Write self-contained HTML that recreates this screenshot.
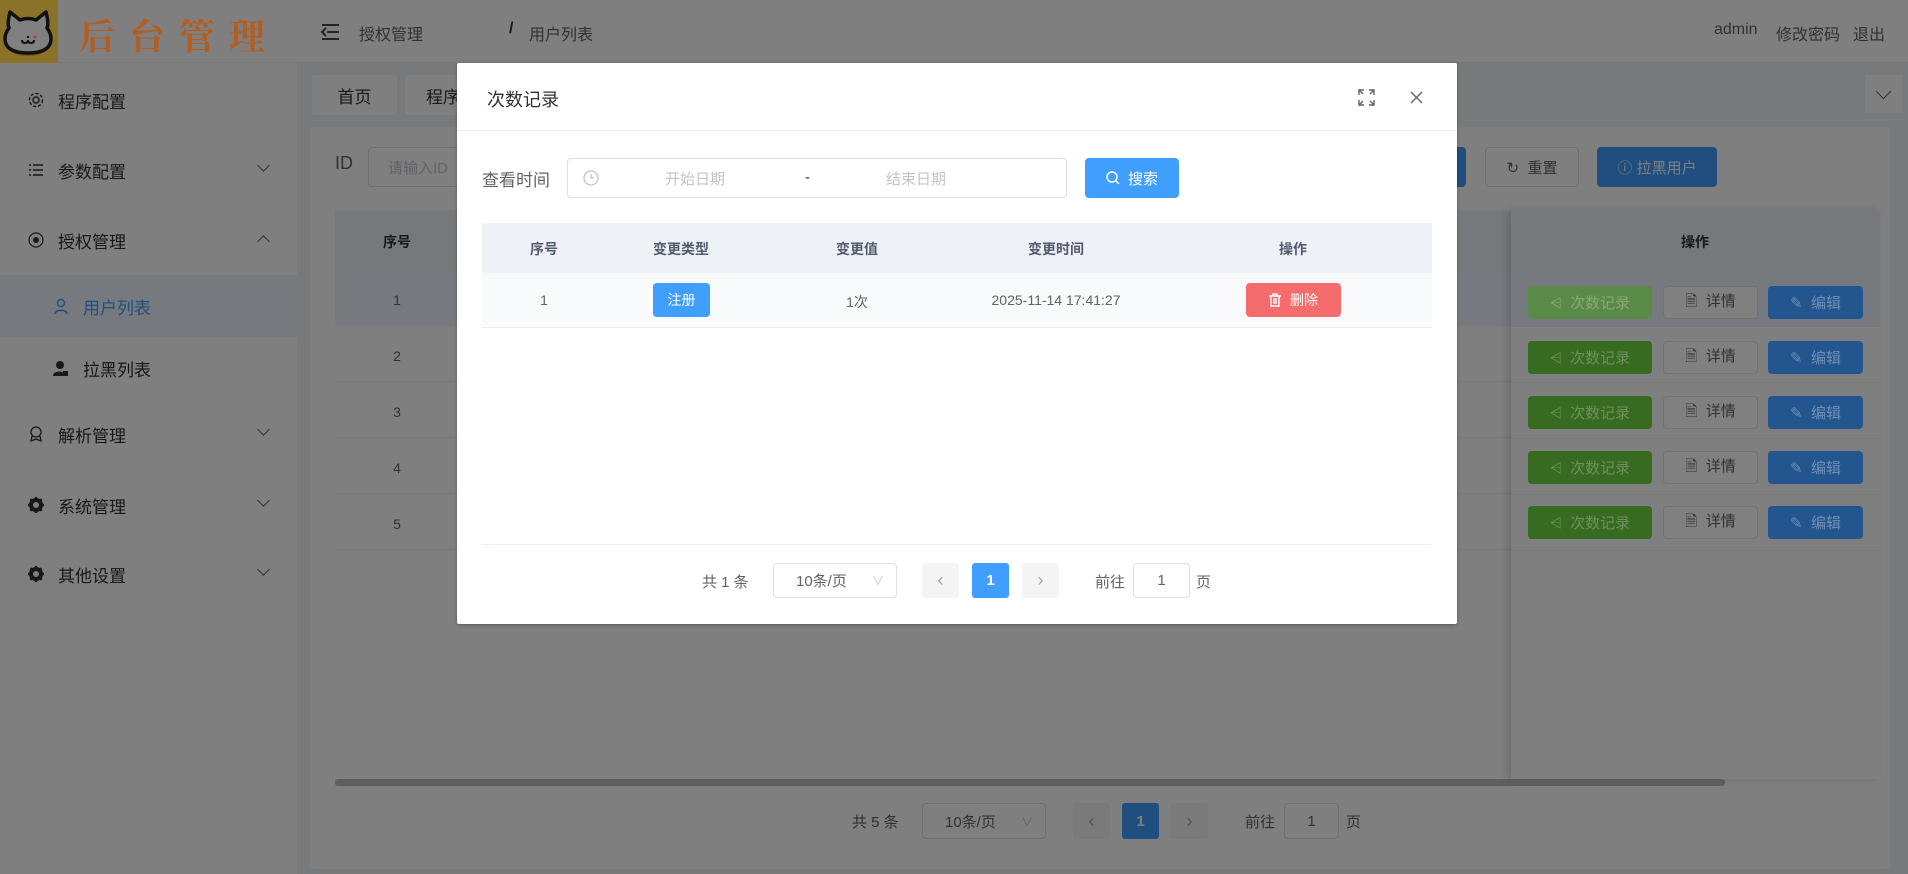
<!DOCTYPE html>
<html><head><meta charset="utf-8">
<style>
*{box-sizing:border-box;margin:0;padding:0}
body{width:1908px;height:874px;overflow:hidden;position:relative;background:#f0f2f5;font-family:"Liberation Sans","Noto Sans CJK SC",sans-serif;color:#303133}
.a{position:absolute}
.c{display:flex;align-items:center;justify-content:center}
.menu{position:absolute;left:0;width:297px;height:62px;display:flex;align-items:center;font-size:17px;color:#303133}
.menu .ic{position:absolute;left:28px;width:16px;height:16px}
.menu .t{position:absolute;left:58px}
.menu .ch{position:absolute;left:259px;width:9px;height:9px;border-right:1.5px solid #606266;border-bottom:1.5px solid #606266;transform:rotate(45deg);top:22px}
.menu .ch.up{transform:rotate(-135deg);top:28px}
.btn{position:absolute;border-radius:4px;display:flex;align-items:center;justify-content:center;font-size:15px;color:#fff}
.cell{position:absolute;font-size:14px;color:#606266;transform:translateX(-50%)}
.row{position:absolute;left:335px;width:1545px;height:56px;border-bottom:1px solid #ebeef5}
.pg{position:absolute;border-radius:3px;background:#f4f4f5;display:flex;align-items:center;justify-content:center;font-size:18px;color:#a0a4ac}
.inp{position:absolute;border:1px solid #dcdfe6;border-radius:4px;background:#fff;display:flex;align-items:center;font-size:15px;color:#606266}
</style></head><body>
<!-- header -->
<div class="a" style="left:0;top:0;width:1908px;height:63px;background:#fff;border-bottom:1px solid #eee"></div>
<svg class="a" style="left:320px;top:24px" width="20" height="16" viewBox="0 0 20 16"><path d="M2 1h17M7 8h12M2 15h17M6 4L2 8l4 4" stroke="#303133" stroke-width="1.8" fill="none"/></svg>
<div class="a" style="left:359px;top:21px;font-size:16px;color:#606266">授权管理</div>
<div class="a" style="left:509px;top:20px;font-size:16px;color:#303133;font-weight:bold">/</div>
<div class="a" style="left:529px;top:21px;font-size:16px;color:#606266">用户列表</div>
<div class="a" style="left:1714px;top:21px;font-size:16px;color:#606266">admin</div>
<div class="a" style="left:1776px;top:21px;font-size:16px;color:#606266">修改密码</div>
<div class="a" style="left:1853px;top:21px;font-size:16px;color:#606266">退出</div>
<!-- sidebar -->
<div class="a" style="left:0;top:63px;width:297px;height:811px;background:#fff"></div>
<div class="menu" style="top:69px"><svg class="ic" viewBox="0 0 16 16"><circle cx="8" cy="8" r="3" fill="none" stroke="#303133" stroke-width="1.5"/><circle cx="8" cy="8" r="6.5" fill="none" stroke="#303133" stroke-width="1.5" stroke-dasharray="3 2"/></svg><span class="t">程序配置</span></div>
<div class="menu" style="top:139px"><svg class="ic" viewBox="0 0 16 16"><path d="M1 3h2M5 3h10M1 8h2M5 8h10M1 13h2M5 13h10" stroke="#303133" stroke-width="1.6"/></svg><span class="t">参数配置</span><i class="ch"></i></div>
<div class="menu" style="top:209px"><svg class="ic" viewBox="0 0 16 16"><circle cx="8" cy="8" r="7" fill="none" stroke="#303133" stroke-width="1.2"/><circle cx="8" cy="8" r="3" fill="#303133"/></svg><span class="t">授权管理</span><i class="ch up"></i></div>
<div class="menu" style="top:275px;background:#ecf5ff;color:#409eff"><svg class="ic" style="left:53px" viewBox="0 0 16 16"><circle cx="8" cy="5" r="3.5" fill="none" stroke="#409eff" stroke-width="1.5"/><path d="M2 16c0-5 12-5 12 0" fill="none" stroke="#409eff" stroke-width="1.5"/></svg><span class="t" style="left:83px">用户列表</span></div>
<div class="menu" style="top:337px"><svg class="ic" style="left:53px" viewBox="0 0 16 16"><circle cx="7" cy="5" r="4" fill="#303133"/><path d="M0 16c0-6 12-6 12 0z" fill="#303133"/><rect x="10" y="11" width="5" height="5" fill="#303133"/></svg><span class="t" style="left:83px">拉黑列表</span></div>
<div class="menu" style="top:403px"><svg class="ic" viewBox="0 0 16 16"><circle cx="8" cy="6" r="5" fill="none" stroke="#303133" stroke-width="1.3"/><path d="M4 10l-1 5 5-2 5 2-1-5" fill="none" stroke="#303133" stroke-width="1.3"/></svg><span class="t">解析管理</span><i class="ch"></i></div>
<div class="menu" style="top:474px"><svg class="ic" viewBox="0 0 16 16"><circle cx="8" cy="8" r="5" fill="none" stroke="#303133" stroke-width="4"/><path d="M8 0v3M8 13v3M0 8h3M13 8h3M2.3 2.3l2 2M11.7 11.7l2 2M2.3 13.7l2-2M11.7 4.3l2-2" stroke="#303133" stroke-width="2.5"/></svg><span class="t">系统管理</span><i class="ch"></i></div>
<div class="menu" style="top:543px"><svg class="ic" viewBox="0 0 16 16"><circle cx="8" cy="8" r="5" fill="none" stroke="#303133" stroke-width="4"/><path d="M8 0v3M8 13v3M0 8h3M13 8h3M2.3 2.3l2 2M11.7 11.7l2 2M2.3 13.7l2-2M11.7 4.3l2-2" stroke="#303133" stroke-width="2.5"/></svg><span class="t">其他设置</span><i class="ch"></i></div>
<!-- tabs -->
<div class="a c" style="left:312px;top:75px;width:85px;height:40px;background:#fff;border-radius:3px;font-size:17px">首页</div>
<div class="a c" style="left:405px;top:75px;width:110px;height:40px;background:#fff;border-radius:3px;font-size:17px">程序配置</div>
<div class="a c" style="left:1865px;top:75px;width:37px;height:38px;background:#fff"><i style="width:11px;height:11px;border-right:1.5px solid #606266;border-bottom:1.5px solid #606266;transform:rotate(45deg);margin-top:-6px"></i></div>
<!-- card -->
<div class="a" style="left:310px;top:127px;width:1580px;height:742px;background:#fff;border-radius:4px"></div>
<div class="a" style="left:335px;top:153px;font-size:18px;color:#606266">ID</div>
<div class="inp" style="left:368px;top:147px;width:200px;height:40px;padding-left:19px;color:#c0c4cc">请输入ID</div>
<div class="btn" style="left:1400px;top:147px;width:66px;height:40px;background:#409eff"></div>
<div class="btn" style="left:1485px;top:147px;width:94px;height:40px;border:1px solid #dcdfe6;background:#fff;color:#606266">&#x21bb;&nbsp; 重置</div>
<div class="btn" style="left:1597px;top:147px;width:120px;height:40px;background:#409eff">ⓘ 拉黑用户</div>
<!-- table -->
<div class="a" style="left:335px;top:210px;width:1545px;height:60px;background:#eef1f6"></div>
<div class="cell" style="left:397px;top:232px;font-weight:bold;color:#303133">序号</div>
<div class="row" style="top:270px;background:#ecf5ff"></div>
<div class="row" style="top:326px"></div>
<div class="row" style="top:382px"></div>
<div class="row" style="top:438px"></div>
<div class="row" style="top:494px"></div>
<div class="cell" style="left:397px;top:292px">1</div>
<div class="cell" style="left:397px;top:348px">2</div>
<div class="cell" style="left:397px;top:404px">3</div>
<div class="cell" style="left:397px;top:460px">4</div>
<div class="cell" style="left:397px;top:516px">5</div>
<!-- fixed op column -->
<div class="a" style="left:1511px;top:210px;width:369px;height:569px;background:#fff;box-shadow:-4px 0 8px rgba(0,0,0,.15)"></div>
<div class="a" style="left:1511px;top:210px;width:369px;height:60px;background:#eef1f6"></div>
<div class="cell" style="left:1695px;top:232px;font-weight:bold;color:#303133">操作</div>
<div class="a" style="left:1511px;top:270px;width:369px;height:56px;background:#ecf5ff"></div>
<div class="a" style="left:1511px;top:326px;width:369px;height:1px;background:#ebeef5"></div>
<div class="a" style="left:1511px;top:382px;width:369px;height:1px;background:#ebeef5"></div>
<div class="a" style="left:1511px;top:438px;width:369px;height:1px;background:#ebeef5"></div>
<div class="a" style="left:1511px;top:494px;width:369px;height:1px;background:#ebeef5"></div>
<div class="a" style="left:1511px;top:550px;width:369px;height:1px;background:#ebeef5"></div>
<!-- scrollbar -->
<div class="a" style="left:335px;top:779px;width:1390px;height:7px;background:#909399;border-radius:3px;opacity:.6"></div>
<!-- bottom pagination -->
<div class="a" style="left:852px;top:811px;font-size:15px;color:#606266">共 5 条</div>
<div class="inp" style="left:922px;top:803px;width:124px;height:36px;padding-left:22px">10条/页<span style="position:absolute;right:12px;color:#c0c4cc;font-size:12px">∨</span></div>
<div class="pg" style="left:1073px;top:803px;width:37px;height:36px">‹</div>
<div class="pg" style="left:1122px;top:803px;width:37px;height:36px;background:#409eff;color:#fff;font-weight:bold;font-size:15px">1</div>
<div class="pg" style="left:1171px;top:803px;width:37px;height:36px">›</div>
<div class="a" style="left:1245px;top:811px;font-size:15px;color:#606266">前往</div>
<div class="inp" style="left:1284px;top:803px;width:55px;height:36px;justify-content:center">1</div>
<div class="a" style="left:1346px;top:811px;font-size:15px;color:#606266">页</div>

<!-- overlay -->
<div class="a" style="left:0;top:0;width:1908px;height:874px;background:rgba(0,0,0,.5)"></div>
<!-- logo & title above -->
<div class="a" style="left:0;top:0;width:58px;height:63px;background:#8a7328"></div>
<svg class="a" style="left:2px;top:6px" width="52" height="52" viewBox="0 0 52 52"><ellipse cx="26" cy="47" rx="14" ry="3" fill="#7a5a10"/><path d="M8 6l10 8q8-3 16 0l10-8q3 12 1 16q6 8 3 16q-4 9-22 9q-18 0-22-9q-3-8 3-16q-2-4 1-16z" fill="#808080" stroke="#111" stroke-width="3.5" stroke-linejoin="round"/><path d="M20 34q0 3 3 3q3 0 3-3q0 3 3 3q3 0 3-3M25 31h2" stroke="#111" stroke-width="2" fill="none"/><circle cx="33" cy="31" r="1.5" fill="#c33"/></svg>
<div class="a" style="left:79px;top:9px;font-size:36px;font-weight:bold;color:#b25e22;letter-spacing:14px;font-family:'Noto Serif CJK SC','Noto Sans CJK SC',serif">后台管理</div>

<!-- dialog -->
<div class="a" style="left:457px;top:63px;width:1000px;height:561px;background:#fff;border-radius:2px;box-shadow:0 1px 3px rgba(0,0,0,.3)"></div>
<div class="a" style="left:487px;top:86px;font-size:18px;color:#303133">次数记录</div>
<svg class="a" style="left:1358px;top:89px" width="17" height="17" viewBox="0 0 17 17"><path d="M1 6V1h5M1 1l4 4M16 6V1h-5M16 1l-4 4M1 11v5h5M1 16l4-4M16 11v5h-5M16 16l-4-4" stroke="#606266" stroke-width="1.4" fill="none"/></svg>
<svg class="a" style="left:1410px;top:91px" width="13" height="13" viewBox="0 0 13 13"><path d="M1 1l11 11M12 1L1 12" stroke="#606266" stroke-width="1.4"/></svg>
<div class="a" style="left:457px;top:130px;width:1000px;height:1px;background:#ebeef5"></div>
<div class="a" style="left:482px;top:166px;font-size:17px;color:#606266">查看时间</div>
<div class="inp" style="left:567px;top:158px;width:500px;height:40px"></div>
<svg class="a" style="left:583px;top:170px" width="16" height="16" viewBox="0 0 16 16"><circle cx="8" cy="8" r="7" fill="none" stroke="#c0c4cc" stroke-width="1.3"/><path d="M8 4v4h3" stroke="#c0c4cc" stroke-width="1.3" fill="none"/></svg>
<div class="a" style="left:665px;top:168px;font-size:15px;color:#c0c4cc">开始日期</div>
<div class="a" style="left:805px;top:169px;font-size:15px;color:#303133">-</div>
<div class="a" style="left:886px;top:168px;font-size:15px;color:#c0c4cc">结束日期</div>
<div class="btn" style="left:1085px;top:158px;width:94px;height:40px;background:#409eff;font-size:15px"><svg width="14" height="14" viewBox="0 0 14 14" style="margin-right:8px"><circle cx="6" cy="6" r="5" fill="none" stroke="#fff" stroke-width="1.5"/><path d="M10 10l3 3" stroke="#fff" stroke-width="1.5"/></svg>搜索</div>
<div class="a" style="left:482px;top:223px;width:950px;height:50px;background:#eef1f6"></div>
<div class="a" style="left:482px;top:273px;width:950px;height:55px;background:#f9fafc;border-bottom:1px solid #ebeef5"></div>
<div class="cell" style="left:544px;top:239px;font-weight:bold;color:#515a6e">序号</div>
<div class="cell" style="left:681px;top:239px;font-weight:bold;color:#515a6e">变更类型</div>
<div class="cell" style="left:857px;top:239px;font-weight:bold;color:#515a6e">变更值</div>
<div class="cell" style="left:1056px;top:239px;font-weight:bold;color:#515a6e">变更时间</div>
<div class="cell" style="left:1293px;top:239px;font-weight:bold;color:#515a6e">操作</div>
<div class="cell" style="left:544px;top:292px">1</div>
<div class="btn" style="left:653px;top:283px;width:57px;height:34px;background:#409eff;font-size:14px">注册</div>
<div class="cell" style="left:857px;top:292px">1次</div>
<div class="cell" style="left:1056px;top:292px">2025-11-14 17:41:27</div>
<div class="btn" style="left:1246px;top:283px;width:95px;height:34px;background:#f56c6c;font-size:14px"><svg width="12" height="14" viewBox="0 0 12 14" style="margin-right:9px"><path d="M0 3h12M4 3V1h4v2M2 3v10h8V3M5 5v6M7 5v6" stroke="#fff" stroke-width="1.4" fill="none"/></svg>删除</div>
<div class="a" style="left:482px;top:544px;width:950px;height:1px;background:#ebeef5"></div>
<div class="a" style="left:702px;top:571px;font-size:15px;color:#606266">共 1 条</div>
<div class="inp" style="left:773px;top:563px;width:124px;height:35px;padding-left:22px">10条/页<span style="position:absolute;right:12px;color:#c0c4cc;font-size:12px">∨</span></div>
<div class="pg" style="left:922px;top:563px;width:37px;height:35px">‹</div>
<div class="pg" style="left:972px;top:563px;width:37px;height:35px;background:#409eff;color:#fff;font-weight:bold;font-size:15px">1</div>
<div class="pg" style="left:1022px;top:563px;width:37px;height:35px">›</div>
<div class="a" style="left:1095px;top:571px;font-size:15px;color:#606266">前往</div>
<div class="inp" style="left:1133px;top:563px;width:57px;height:35px;justify-content:center">1</div>
<div class="a" style="left:1196px;top:571px;font-size:15px;color:#606266">页</div>

<!-- op buttons drawn in overlay-applied colors -->
<div class="btn" style="left:1528px;top:286px;width:124px;height:33px;background:#5a8a48;color:#88a878">⩤&nbsp; 次数记录</div>
<div class="btn" style="left:1663px;top:286px;width:95px;height:33px;border:1px solid #727272;background:#808080;color:#303133">🗎&nbsp; 详情</div>
<div class="btn" style="left:1768px;top:286px;width:95px;height:33px;background:#23568f;color:#6f8fb3">✎&nbsp; 编辑</div>
<div class="btn" style="left:1528px;top:341px;width:124px;height:33px;background:#386b22;color:#6f8f5c">⩤&nbsp; 次数记录</div>
<div class="btn" style="left:1663px;top:341px;width:95px;height:33px;border:1px solid #727272;background:#808080;color:#303133">🗎&nbsp; 详情</div>
<div class="btn" style="left:1768px;top:341px;width:95px;height:33px;background:#23568f;color:#6f8fb3">✎&nbsp; 编辑</div>
<div class="btn" style="left:1528px;top:396px;width:124px;height:33px;background:#386b22;color:#6f8f5c">⩤&nbsp; 次数记录</div>
<div class="btn" style="left:1663px;top:396px;width:95px;height:33px;border:1px solid #727272;background:#808080;color:#303133">🗎&nbsp; 详情</div>
<div class="btn" style="left:1768px;top:396px;width:95px;height:33px;background:#23568f;color:#6f8fb3">✎&nbsp; 编辑</div>
<div class="btn" style="left:1528px;top:451px;width:124px;height:33px;background:#386b22;color:#6f8f5c">⩤&nbsp; 次数记录</div>
<div class="btn" style="left:1663px;top:451px;width:95px;height:33px;border:1px solid #727272;background:#808080;color:#303133">🗎&nbsp; 详情</div>
<div class="btn" style="left:1768px;top:451px;width:95px;height:33px;background:#23568f;color:#6f8fb3">✎&nbsp; 编辑</div>
<div class="btn" style="left:1528px;top:506px;width:124px;height:33px;background:#386b22;color:#6f8f5c">⩤&nbsp; 次数记录</div>
<div class="btn" style="left:1663px;top:506px;width:95px;height:33px;border:1px solid #727272;background:#808080;color:#303133">🗎&nbsp; 详情</div>
<div class="btn" style="left:1768px;top:506px;width:95px;height:33px;background:#23568f;color:#6f8fb3">✎&nbsp; 编辑</div>
</body></html>
